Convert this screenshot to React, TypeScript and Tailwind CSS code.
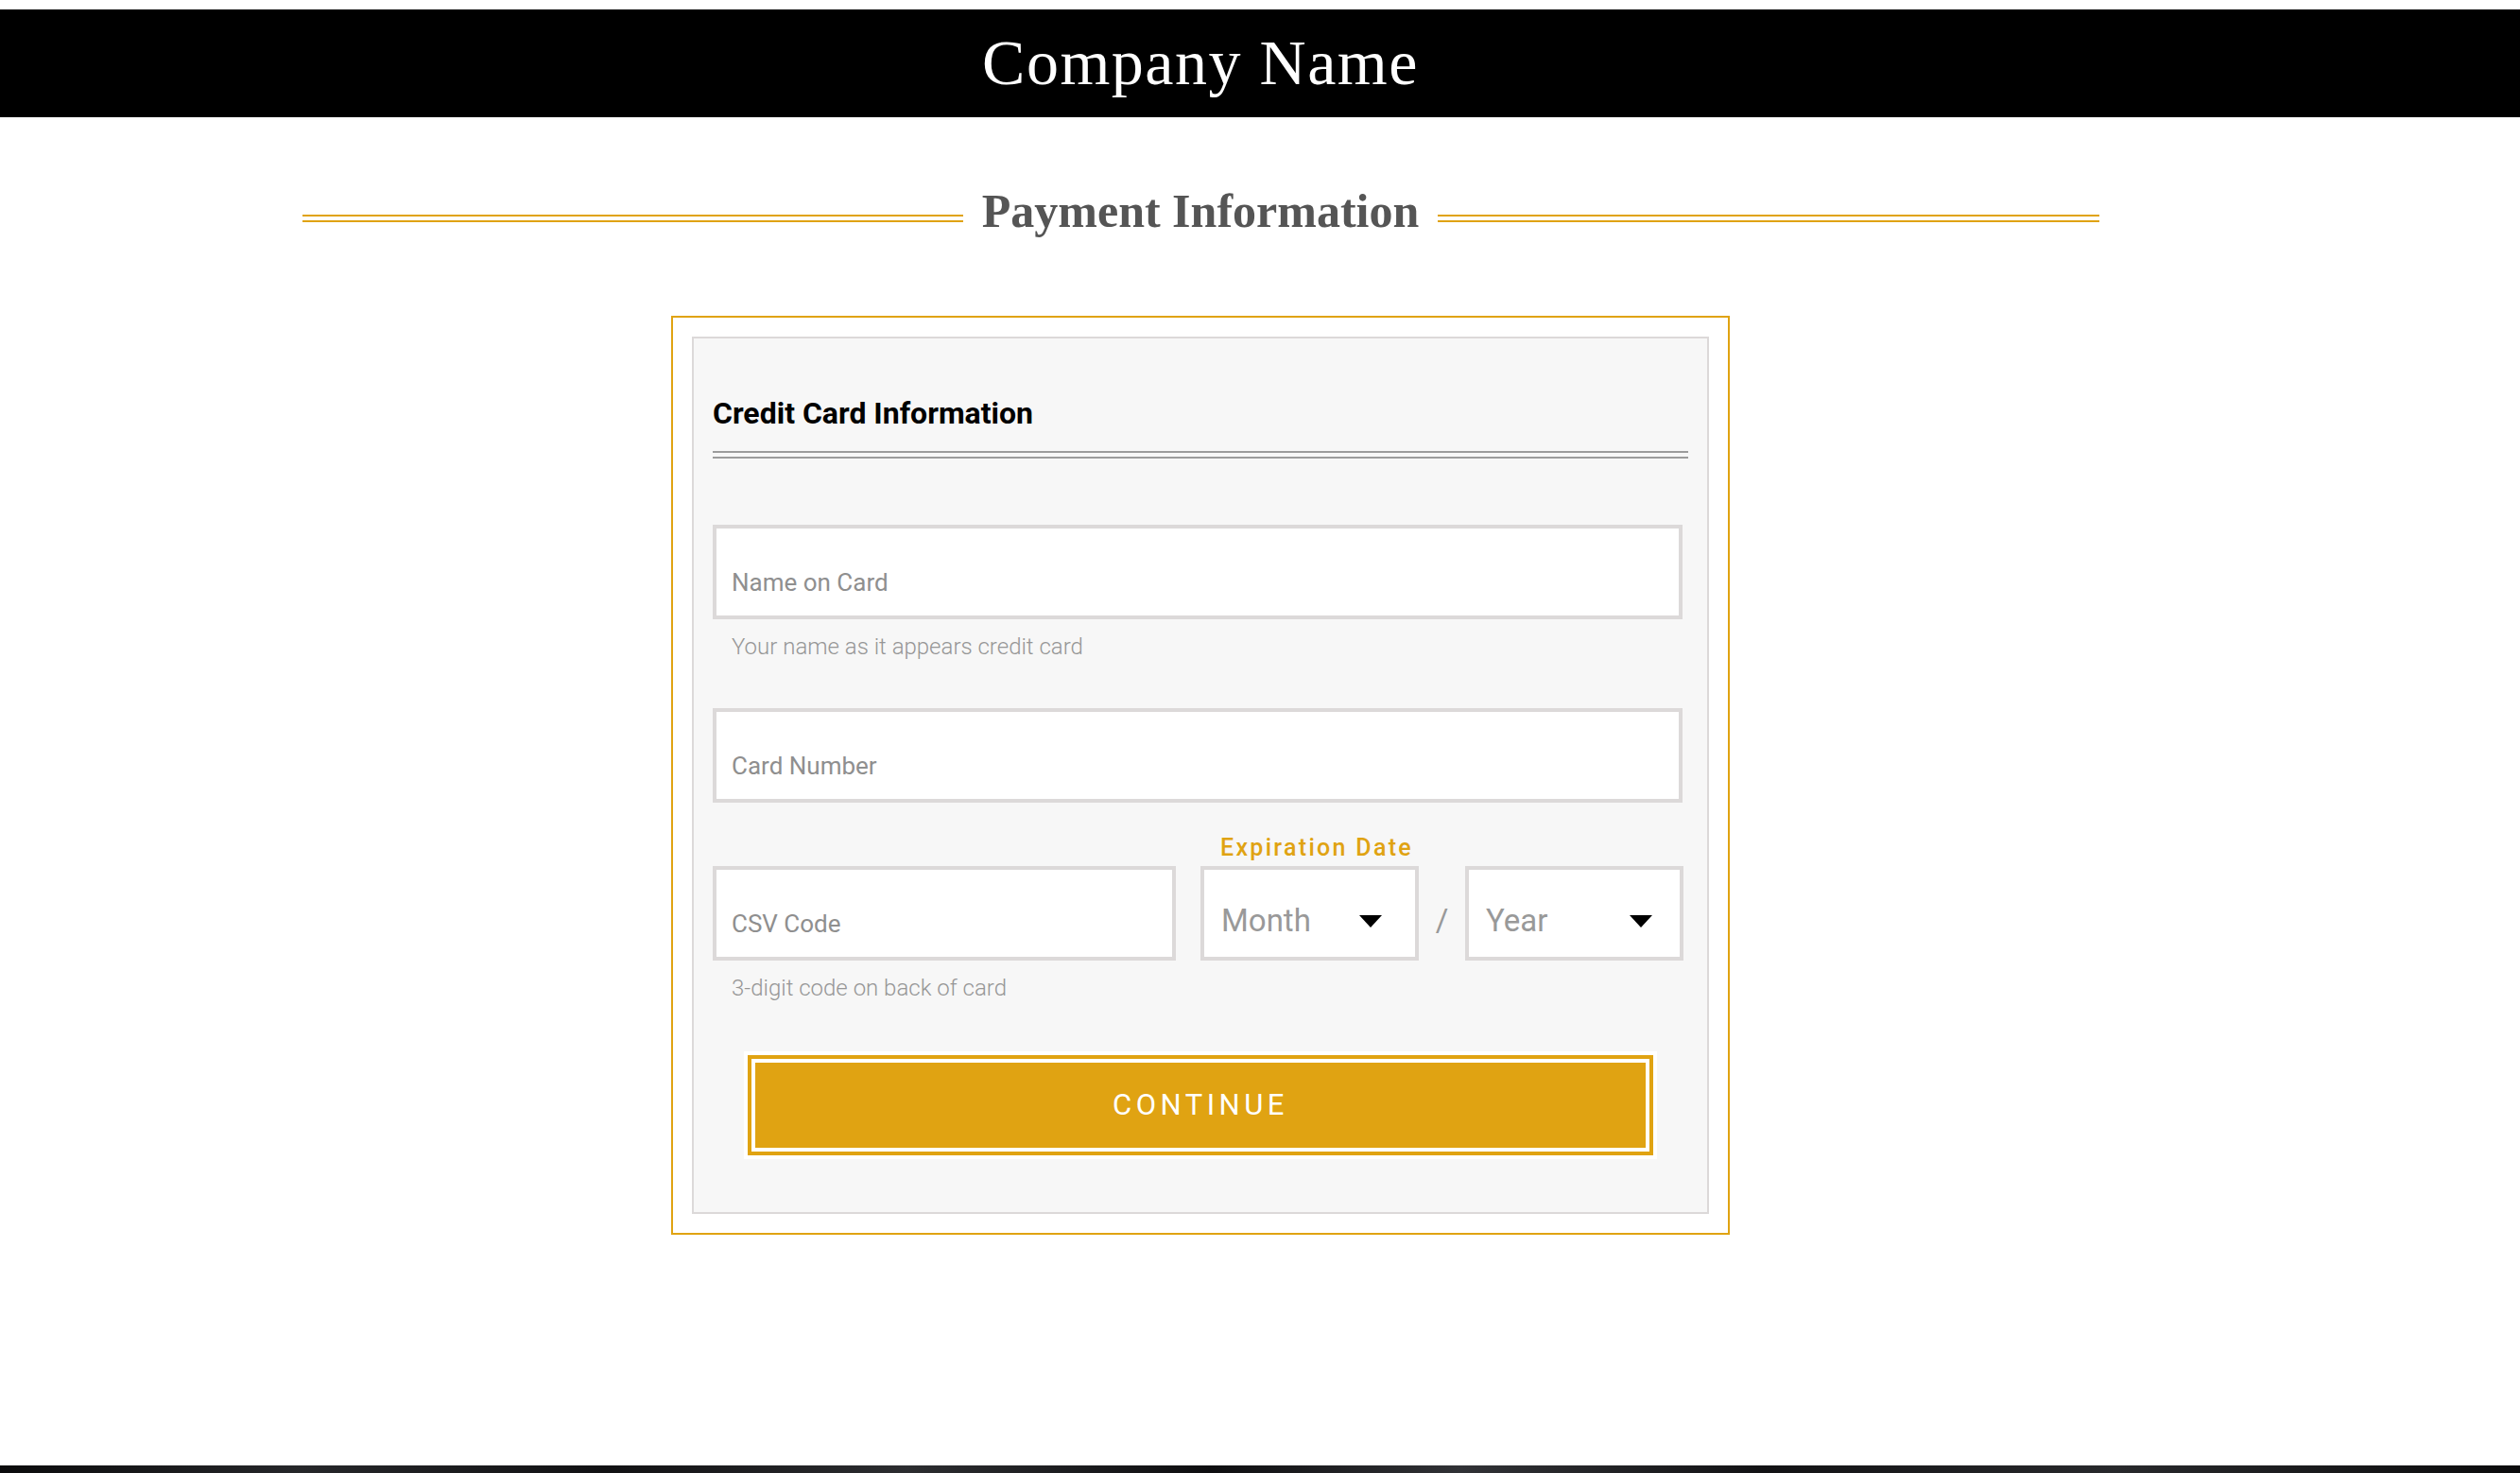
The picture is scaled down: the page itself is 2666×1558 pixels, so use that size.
import React from 'react';

const GOLD = '#e0a312';

function TextField({ placeholder, className = '' }: { placeholder: string; className?: string }) {
  return (
    <input
      type="text"
      placeholder={placeholder}
      className={`block h-[100px] border-4 border-[#dcd9d9] bg-white px-[16px] pt-[42px] pb-[20px] text-[26px] leading-[30px] text-[#555] outline-none placeholder:text-[#8f8f8f] ${className}`}
    />
  );
}

function Helper({ children }: { children: React.ReactNode }) {
  return <p className="mt-[15px] pl-[20px] text-[24px] leading-[28px] font-light text-[#969696]">{children}</p>;
}

function Caret() {
  return (
    <svg width="24" height="13" viewBox="0 0 24 13" className="shrink-0">
      <polygon points="0,0 24,0 12,13" fill="#000" />
    </svg>
  );
}

function SelectBox({ label, pr }: { label: string; pr: string }) {
  return (
    <div className={`flex h-[100px] w-[231px] items-center justify-between border-4 border-[#dcd9d9] bg-white pl-[18px] pt-[16px] ${pr}`}>
      <span className="text-[33px] leading-[38px] text-[#999]">{label}</span>
      <Caret />
    </div>
  );
}

export default function App() {
  return (
    <div className="min-h-screen bg-white pt-[10px]" style={{ fontFamily: 'Roboto, "Noto Sans", sans-serif' }}>
      <header className="h-[114px] w-full bg-black">
        <div className="flex h-full w-[2540px] items-center justify-center">
          <h1 className="pb-[2px] text-[68px] leading-[75px] tracking-[1.5px] text-white" style={{ fontFamily: '"Liberation Serif", "Times New Roman", serif' }}>
            Company Name
          </h1>
        </div>
      </header>

      <main className="w-[2540px] pb-[244px]">
        <div className="mx-auto mt-[72px] flex w-[1901px] items-start gap-[20px]">
          <div className="mt-[31px] h-[8px] flex-1 border-y-2 border-[#e0a312]" />
          <h2 className="text-[50px] leading-[55px] font-bold text-[#555]" style={{ fontFamily: '"Liberation Serif", "Times New Roman", serif' }}>
            Payment Information
          </h2>
          <div className="mt-[31px] h-[8px] flex-1 border-y-2 border-[#e0a312]" />
        </div>

        <section className="mx-auto mt-[83px] w-[1120px] border-2 border-[#e0a312] bg-white p-[20px]">
          <div className="border-2 border-[#dcd9d9] bg-[#f7f7f7] px-[20px] pt-[61px] pb-[56px]">
            <h3 className="text-[32px] leading-[37px] font-bold text-black">Credit Card Information</h3>
            <div className="mt-[21px] h-[8px] border-y-2 border-[#9c9c9c]" />

            <div className="mt-[70px]">
              <TextField placeholder="Name on Card" className="w-[1026px]" />
              <Helper>Your name as it appears credit card</Helper>
            </div>

            <div className="mt-[51px]">
              <TextField placeholder="Card Number" className="w-[1026px]" />
            </div>

            <p className="mt-[33px] ml-[537px] text-[25px] leading-[29px] font-medium tracking-[2.3px]" style={{ color: GOLD }}>
              Expiration Date
            </p>
            <div className="mt-[5px] flex">
              <TextField placeholder="CSV Code" className="w-[490px]" />
              <div className="ml-[26px]">
                <SelectBox label="Month" pr="pr-[35px]" />
              </div>
              <div className="flex h-[100px] w-[49px] items-center justify-center pt-[16px] text-[33px] leading-[38px] text-[#999]">/</div>
              <SelectBox label="Year" pr="pr-[29px]" />
            </div>
            <Helper>3-digit code on back of card</Helper>

            <div className="mx-auto mt-[53px] w-[966px] bg-white p-[4px]">
              <div className="bg-[#e0a312] p-[4px]">
                <div className="bg-white p-[4px]">
                  <button type="button" className="flex h-[90px] w-full items-center justify-center bg-[#e0a312] text-[31px] leading-[36px] tracking-[4.5px] text-white">
                    CONTINUE
                  </button>
                </div>
              </div>
            </div>
          </div>
        </section>
      </main>

      <footer className="h-[200px] w-full bg-[linear-gradient(90deg,#0b0b0c,#26272a_12%,#111113_24%,#2c2d30_36%,#0e0e10_48%,#313236_58%,#121214_70%,#28292c_84%,#0b0b0c)]" />
    </div>
  );
}
